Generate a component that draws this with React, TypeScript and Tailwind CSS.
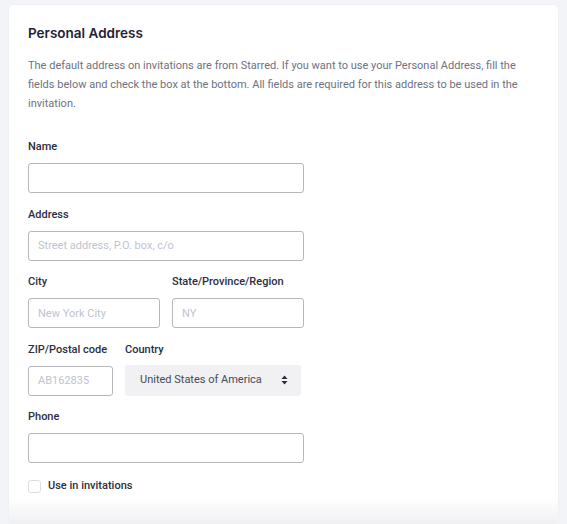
import { useState } from 'react'

const labelCls = 'block text-[11px] leading-[14px] font-medium text-[#2b2e3d] mb-[9px]'
const inputCls =
  'block h-[30px] rounded-[3px] border border-[#b5b7bd] bg-white px-[9px] text-[11px] text-[#3f4250] placeholder:text-[#c0c3cf] outline-none'

export default function App() {
  const [useIt, setUseIt] = useState(false)

  return (
    <div
      className="min-h-[524px] bg-[#f3f4f8] pt-[5px] pl-[9px] pr-[9px]"
      style={{ fontFamily: 'Roboto, "Liberation Sans", sans-serif' }}
    >
      <div className="w-[549px] rounded-[5px] bg-white shadow-[0_0_2px_rgba(0,0,0,0.06)] overflow-hidden">
        <div className="px-[19px] pt-[19px]">
          <h2
            className="text-[13.5px] leading-[18px] font-semibold text-[#1f2233]"
            style={{ fontFamily: 'Inter, "Open Sans", sans-serif' }}
          >
            Personal Address
          </h2>
          <p className="mt-[14px] text-[11px] leading-[19px] text-[#6e7180] pr-[14px]">
            The default address on invitations are from Starred. If you want to use your Personal Address, fill the
            fields below and check the box at the bottom. All fields are required for this address to be used in the
            invitation.
          </p>

          <div className="mt-[27px] flex flex-col gap-[14.5px]">
            {/* Name */}
            <div>
              <label className={labelCls}>Name</label>
              <input className={`${inputCls} w-[276px]`} />
            </div>

            {/* Address */}
            <div>
              <label className={labelCls}>Address</label>
              <input className={`${inputCls} w-[276px]`} placeholder="Street address, P.O. box, c/o" />
            </div>

            {/* City / State */}
            <div className="flex gap-[12px]">
              <div>
                <label className={labelCls}>City</label>
                <input className={`${inputCls} w-[132px]`} placeholder="New York City" />
              </div>
              <div>
                <label className={labelCls}>State/Province/Region</label>
                <input className={`${inputCls} w-[132px]`} placeholder="NY" />
              </div>
            </div>

            {/* ZIP / Country */}
            <div className="flex gap-[12px]">
              <div>
                <label className={labelCls}>ZIP/Postal code</label>
                <input className={`${inputCls} w-[85px]`} placeholder="AB162835" />
              </div>
              <div>
                <label className={labelCls}>Country</label>
                <div className="-mt-[1px] flex h-[31px] w-[176px] items-center justify-between rounded-[3px] bg-[#f1f1f3] pl-[15px] pr-[13px] text-[11px] text-[#474a58]">
                  <span>United States of America</span>
                  <svg width="7" height="10" viewBox="0 0 7 10" fill="#2b2e3d">
                    <path d="M3.5 0.5 L6.5 4 H0.5 Z" />
                    <path d="M3.5 9.5 L6.5 6 H0.5 Z" />
                  </svg>
                </div>
              </div>
            </div>

            {/* Phone */}
            <div>
              <label className={labelCls}>Phone</label>
              <input className={`${inputCls} w-[276px]`} />
            </div>
          </div>

          <label className="mt-[16px] flex items-center gap-[7px] cursor-pointer">
            <input
              type="checkbox"
              checked={useIt}
              onChange={() => setUseIt(!useIt)}
              className="h-[13px] w-[13px] appearance-none rounded-[3px] border border-[#dcdde3] bg-white"
            />
            <span className="text-[11px] leading-[14px] font-medium text-[#2b2e3d]">Use in invitations</span>
          </label>
        </div>
        <div className="mt-[6px] h-[26px] bg-gradient-to-b from-white to-[#efeff2]" />
      </div>
    </div>
  )
}
